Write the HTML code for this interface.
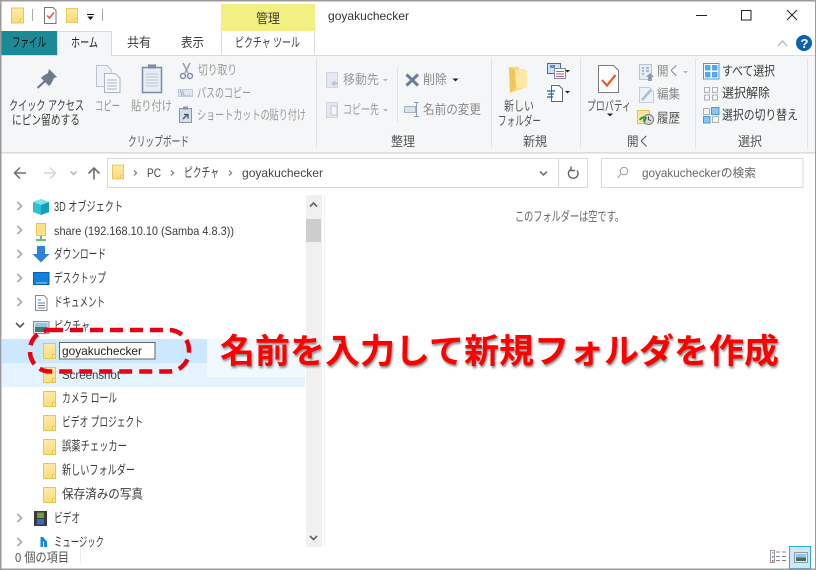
<!DOCTYPE html>
<html lang="ja"><head><meta charset="utf-8"><title>goyakuchecker</title>
<style>
html,body{margin:0;padding:0;background:#fff;width:816px;height:570px;overflow:hidden}
svg{display:block}
text{font-family:"Liberation Sans","Noto Sans CJK JP",sans-serif;font-size:13px;fill:#3c3c3c}
text.l{font-size:12px}
.g{fill:#9a9a9a}.m{fill:#555}.d{fill:#222}
.c{fill:none;stroke:#a6a6a6;stroke-width:1.6}
</style></head><body>
<svg width="816" height="570" viewBox="0 0 816 570" xmlns="http://www.w3.org/2000/svg">
<defs>
<linearGradient id="fg" x1="0" y1="0" x2="0" y2="1"><stop offset="0" stop-color="#ffeaa4"/><stop offset="1" stop-color="#fbdc7e"/></linearGradient>
<symbol id="f" viewBox="0 0 13 16" overflow="visible"><rect x=".5" y=".5" width="12" height="15" fill="url(#fg)" stroke="#eac453"/><path d="M9.5 15.5V11.5H12.5" fill="#fff3c4" stroke="#eac453"/></symbol>
</defs>
<rect width="816" height="570" fill="#fff"/>
<!-- title area -->
<rect x="221" y="4" width="94" height="27" fill="#f2f083"/>
<text x="256" y="23" textLength="24" lengthAdjust="spacingAndGlyphs">管理</text>
<path d="M221.5 31V54M314.5 31V54" stroke="#d9d9d9"/>
<text x="235" y="47" textLength="65" lengthAdjust="spacingAndGlyphs">ピクチャ ツール</text>
<text class="l" x="328" y="20" textLength="81" lengthAdjust="spacingAndGlyphs" style="fill:#333">goyakuchecker</text>
<use href="#f" x="11" y="7" width="13" height="17"/>
<path d="M32.5 9V21M102.5 9V21" stroke="#a8a8a8"/>
<path d="M44.5 7.5H53L56 10.5V23.5H44.5Z" fill="#fff" stroke="#777"/><path d="M47 15.5L49.5 18L54 12.5" fill="none" stroke="#e8552a" stroke-width="1.5"/>
<use href="#f" x="66" y="7" width="12" height="17"/>
<path d="M87 14.5H94" stroke="#111"/><path d="M87.5 16.5H93.5L90.5 20Z" fill="#111"/>
<!-- window buttons -->
<path d="M696 15.5H707" stroke="#222"/><rect x="741.5" y="10.5" width="9.5" height="9.5" fill="none" stroke="#222"/><path d="M787 10L797 20M797 10L787 20" stroke="#222"/>
<path d="M778 46L782.5 41L787 46" fill="none" stroke="#bdbdbd" stroke-width="1.5"/>
<circle cx="804" cy="43" r="8" fill="#0a62b3"/><text x="800.5" y="48" style="font-size:13px;font-weight:bold;fill:#fff">?</text>
<!-- tabs -->
<rect x="1" y="31" width="56" height="24" fill="#1a8a96"/>
<text x="12" y="47" textLength="34" lengthAdjust="spacingAndGlyphs" style="fill:#111">ファイル</text>
<rect x="0" y="55" width="816" height="1" fill="#dadbdc"/>
<rect x="57.5" y="31.5" width="54" height="24" fill="#f5f6f7" stroke="#dadbdc"/><rect x="58" y="54" width="53" height="3" fill="#f5f6f7"/>
<text x="71" y="47" textLength="27" lengthAdjust="spacingAndGlyphs" style="fill:#222">ホーム</text>
<text x="127" y="47" textLength="24" lengthAdjust="spacingAndGlyphs">共有</text>
<text x="181" y="47" textLength="23" lengthAdjust="spacingAndGlyphs">表示</text>
<!-- ribbon -->
<rect x="1" y="56" width="815" height="96" fill="#f5f6f7"/>
<rect x="0" y="152" width="816" height="1.5" fill="#dadbdc"/>
<path d="M316.5 58V149M491.5 58V149M580.5 58V149M695.5 58V149M807.5 58V149" stroke="#e2e3e4"/>
<path d="M397.5 67V122" stroke="#dfe0e1"/>
<!-- clipboard -->
<path d="M49 69L57 77L54 78L51 84L49 86L41 78L43 76L48 73Z" fill="#6e7b8c"/><path d="M45 81L37.5 88" stroke="#6e7b8c" stroke-width="2.2"/>
<path d="M96.5 65.5H107L111 69.5V86.5H96.5Z" fill="#eef2f8" stroke="#b7c3d6"/><path d="M104.5 73.5H115L120 78V92.5H104.5Z" fill="#f5f7fb" stroke="#a8b6cc"/><path d="M107 80H117M107 83H117M107 86H117M107 89H117" stroke="#a9b5c8"/>
<rect x="142.5" y="67.5" width="19" height="25" fill="#e7ecf4" stroke="#7a8ba8" stroke-width="1.5"/><rect x="148" y="64.5" width="8" height="4" fill="#7a8ba8"/><path d="M146 74H158M146 77H158M146 80H158M146 83H158M146 86H158" stroke="#bfc9d9"/>
<path d="M183 63L188 73M190 63L185 73" stroke="#9aa3ae" stroke-width="1.6"/><circle cx="183" cy="76" r="2.5" fill="none" stroke="#7d8ea8" stroke-width="1.5"/><circle cx="190" cy="76" r="2.5" fill="none" stroke="#7d8ea8" stroke-width="1.5"/>
<rect x="178.5" y="89.5" width="14" height="7" fill="#dde5f1" stroke="#bfcbdd"/><text x="180" y="96" textLength="11" lengthAdjust="spacingAndGlyphs" style="font-size:7px;fill:#7d8ea8">\\...</text>
<rect x="179.5" y="108.5" width="12" height="14" fill="#d5deea" stroke="#8595ad"/><rect x="183" y="106.5" width="5" height="3" fill="#8595ad"/><path d="M183 119L187 115M184 114.5H188V118.5" fill="none" stroke="#44546c" stroke-width="1.3"/>
<text x="9" y="110" textLength="75" lengthAdjust="spacingAndGlyphs">クイック アクセス</text>
<text x="12" y="124.5" textLength="68" lengthAdjust="spacingAndGlyphs">にピン留めする</text>
<text x="95" y="110.5" textLength="25" lengthAdjust="spacingAndGlyphs" class="g">コピー</text>
<text x="131" y="110.5" textLength="41" lengthAdjust="spacingAndGlyphs" class="g">貼り付け</text>
<text x="198" y="74.5" textLength="39" lengthAdjust="spacingAndGlyphs" class="g">切り取り</text>
<text x="197" y="97.5" textLength="54" lengthAdjust="spacingAndGlyphs" class="g">パスのコピー</text>
<text x="197" y="119.5" textLength="109" lengthAdjust="spacingAndGlyphs" class="g">ショートカットの貼り付け</text>
<text x="128" y="146" textLength="61" lengthAdjust="spacingAndGlyphs" class="m">クリップボード</text>
<!-- organize -->
<rect x="326.5" y="72.5" width="11" height="15" fill="#e4e9f1" stroke="#ccd5e2"/><path d="M331 83.5L335 80.5V82.5H338V84.5H335V86.5Z" fill="#b7c2d3"/>
<rect x="326.5" y="102.5" width="11" height="15" fill="#e4e9f1" stroke="#ccd5e2"/><rect x="331" y="106" width="6" height="9" fill="#f3f5f9" stroke="#bcc7d7"/>
<text x="343" y="84" textLength="36" lengthAdjust="spacingAndGlyphs" class="g">移動先</text>
<path d="M383 79H388L385.5 81.5Z" fill="#b4b4b4"/>
<text x="343" y="114" textLength="36" lengthAdjust="spacingAndGlyphs" class="g">コピー先</text>
<path d="M383 109H388L385.5 111.5Z" fill="#b4b4b4"/>
<path d="M406.5 74.5L418 85.5M418 74.5L406.5 85.5" stroke="#6b7e99" stroke-width="3"/>
<text x="423" y="84" textLength="24" lengthAdjust="spacingAndGlyphs" style="fill:#8a8a8a">削除</text>
<path d="M452.5 78.5H458.5L455.5 81.5Z" fill="#222"/>
<rect x="404.5" y="106.5" width="11" height="6" fill="#dbe2ed" stroke="#a4b1c5"/><path d="M416.5 102.5V116.5M414 102.5H419M414 116.5H419" stroke="#8c9cb3"/>
<text x="423" y="114" textLength="58" lengthAdjust="spacingAndGlyphs" style="fill:#8a8a8a">名前の変更</text>
<text x="391" y="146" textLength="24" lengthAdjust="spacingAndGlyphs" class="m">整理</text>
<!-- new -->
<path d="M509 67H519V69L527 70V87L510 93Z" fill="#fbd978"/><path d="M515 70H527V88H512Z" fill="#fde9a4"/><path d="M509 67L515 70L516 88L510 93Z" fill="#eec65c"/>
<rect x="547.5" y="63.5" width="13" height="10" fill="#cfe0f1" stroke="#4d6d8f"/><rect x="550" y="65" width="5" height="3" fill="#5c8fc2"/><rect x="554.5" y="68.5" width="11" height="10" fill="#fff" stroke="#7b8ba1"/><path d="M556 71.5H564M556 74H564M556 76.5H564" stroke="#c05b7a"/>
<path d="M565 70H570L567.5 72.5Z" fill="#222"/>
<path d="M551.5 85.5H559L562.5 89V101.5H551.5Z" fill="#fff" stroke="#666"/><path d="M547 91H555M548 94H554M547 97H553" stroke="#1565b8" stroke-width="1.3"/>
<path d="M565 91H570L567.5 93.5Z" fill="#222"/>
<text x="504" y="110.5" textLength="30" lengthAdjust="spacingAndGlyphs" class="m">新しい</text>
<text x="498" y="125.5" textLength="43" lengthAdjust="spacingAndGlyphs" class="m">フォルダー</text>
<text x="523" y="146" textLength="24" lengthAdjust="spacingAndGlyphs" class="m">新規</text>
<!-- open -->
<path d="M598.5 65.5H613.5L618.5 70.5V92.5H598.5Z" fill="#fff" stroke="#7b7b7b"/><path d="M602 80L607 85.5L615.5 75" fill="none" stroke="#ee5a24" stroke-width="2.2"/>
<text x="587" y="110.5" textLength="44" lengthAdjust="spacingAndGlyphs" class="m">プロパティ</text>
<path d="M607 113.5H613L610 116.5Z" fill="#222"/>
<rect x="639.5" y="64.5" width="12" height="15" fill="#e6ecf4" stroke="#b8c4d5"/><path d="M642 68H644M642 71H644M642 74H644M646 68H649M646 71H649" stroke="#8c9cb3" stroke-width="1.3"/><path d="M650 73L654 77H652V81H648V77H646Z" fill="#8c9cb3"/>
<text x="657" y="75.5" textLength="23" lengthAdjust="spacingAndGlyphs" style="fill:#8a8a8a">開く</text>
<path d="M683 71H688L685.5 73.5Z" fill="#b4b4b4"/>
<path d="M639.5 87.5H649.5L653.5 91.5V102.5H639.5Z" fill="#eef2f8" stroke="#c2ccdb"/><path d="M642 100L651 90" stroke="#a8bddb" stroke-width="2.5"/>
<text x="657" y="98.5" textLength="23" lengthAdjust="spacingAndGlyphs" style="fill:#8a8a8a">編集</text>
<rect x="637.5" y="110.5" width="12" height="13" fill="#fce49a" stroke="#e6c35a"/><circle cx="648.5" cy="119.5" r="5" fill="#dcdcdc" stroke="#777"/><path d="M648.5 116.5V119.5L651 121" fill="none" stroke="#444"/><path d="M640 120A4 4 0 0 1 646 118L644 122" fill="none" stroke="#2d9a3e" stroke-width="2"/>
<text x="657" y="122.5" textLength="23" lengthAdjust="spacingAndGlyphs" class="m">履歴</text>
<text x="627" y="146" textLength="23" lengthAdjust="spacingAndGlyphs" class="m">開く</text>
<!-- select -->
<rect x="703.5" y="63.5" width="15.5" height="15.5" fill="#fff" stroke="#3d9fe0"/><rect x="705" y="65" width="5.5" height="5.5" fill="#55a9e8"/><rect x="712" y="65" width="5.5" height="5.5" fill="#55a9e8"/><rect x="705" y="72" width="5.5" height="5.5" fill="#55a9e8"/><rect x="712" y="72" width="5.5" height="5.5" fill="#55a9e8"/>
<text x="722" y="75.5" textLength="53" lengthAdjust="spacingAndGlyphs">すべて選択</text>
<rect x="704.5" y="87.5" width="5" height="5" fill="none" stroke="#b0b0b0"/><rect x="712.5" y="87.5" width="5" height="5" fill="none" stroke="#b0b0b0"/><rect x="704.5" y="95" width="5" height="5" fill="none" stroke="#b0b0b0"/><rect x="712.5" y="95" width="5" height="5" fill="none" stroke="#b0b0b0"/>
<text x="722" y="97.5" textLength="48" lengthAdjust="spacingAndGlyphs">選択解除</text>
<rect x="703.5" y="108.5" width="6" height="6" fill="none" stroke="#b0b0b0"/><rect x="711.5" y="107.5" width="7.5" height="7" fill="#8cc5ef" stroke="#3d9fe0"/><rect x="703.5" y="116.5" width="6.5" height="6.5" fill="#8cc5ef" stroke="#3d9fe0"/><rect x="712.5" y="116.5" width="6" height="6" fill="none" stroke="#b0b0b0"/>
<text x="722" y="119.5" textLength="76" lengthAdjust="spacingAndGlyphs">選択の切り替え</text>
<text x="738" y="146" textLength="24" lengthAdjust="spacingAndGlyphs" class="m">選択</text>
<!-- nav -->
<path d="M20 167.5L14.5 173L20 178.5M15 173H26" fill="none" stroke="#6d6d6d" stroke-width="1.5"/>
<path d="M50 167.5L55.5 173L50 178.5M55 173H44" fill="none" stroke="#d6d6d6" stroke-width="1.5"/>
<path d="M70.5 171.5L73.5 174.5L76.5 171.5" fill="none" stroke="#b5b5b5" stroke-width="1.5"/>
<path d="M88.5 173.5L94 168L99.5 173.5M94 168.5V179.5" fill="none" stroke="#6d6d6d" stroke-width="1.6"/>
<rect x="107.5" y="158.5" width="480" height="29" fill="#fff" stroke="#d9d9d9"/>
<path d="M558.5 159V187" stroke="#d9d9d9"/>
<use href="#f" x="112" y="164" width="12" height="16"/>
<path d="M134 170.5L136.5 173L134 175.5M171 170.5L173.5 173L171 175.5M229 170.5L231.5 173L229 175.5" fill="none" stroke="#888" stroke-width="1.4"/>
<text class="l" x="147" y="177" textLength="14" lengthAdjust="spacingAndGlyphs" style="fill:#444">PC</text>
<text x="184" y="177" textLength="35" lengthAdjust="spacingAndGlyphs" style="fill:#444">ピクチャ</text>
<text class="l" x="242" y="177" textLength="81" lengthAdjust="spacingAndGlyphs" style="fill:#444">goyakuchecker</text>
<path d="M540 171.5L543.5 175L547 171.5" fill="none" stroke="#666" stroke-width="1.5"/>
<path d="M577 170.5A4.8 4.8 0 1 1 571.5 169M571 166.5V170.5H575" fill="none" stroke="#666" stroke-width="1.4"/>
<rect x="601.5" y="158.5" width="201.5" height="29" fill="#fff" stroke="#d9d9d9"/>
<circle cx="624" cy="171" r="3.8" fill="none" stroke="#9a9aa6"/><path d="M621 174L617.5 178" stroke="#b79ab0"/>
<text class="l" x="642" y="177" textLength="114" lengthAdjust="spacingAndGlyphs" style="fill:#666">goyakucheckerの検索</text>
<text x="515" y="221" textLength="109" lengthAdjust="spacingAndGlyphs" style="fill:#666">このフォルダーは空です。</text>
<!-- tree selection -->
<rect x="2" y="339" width="205" height="24" fill="#cce8ff"/>
<rect x="207" y="339" width="98" height="38" fill="#f1f8fe"/>
<rect x="2" y="363" width="205" height="24" fill="#e5f3ff"/>
<rect x="207" y="377" width="98" height="10" fill="#e5f3ff"/>
<!-- tree chevrons -->
<path class="c" d="M17.5 202L21.5 206L17.5 210M17.5 226L21.5 230L17.5 234M17.5 250L21.5 254L17.5 258M17.5 274L21.5 278L17.5 282M17.5 298L21.5 302L17.5 306M17.5 514L21.5 518L17.5 522M17.5 538L21.5 542L17.5 546"/>
<path d="M16 323L20 327L24 323" fill="none" stroke="#555" stroke-width="1.6"/>
<!-- tree icons -->
<path d="M41 199L49 202V212L41 215L33 212V202Z" fill="#2fc0d8"/><path d="M41 199L49 202L41 205L33 202Z" fill="#7fe3ee"/><path d="M41 205L49 202V212L41 215Z" fill="#139fb8"/>
<path d="M36.5 223.5H45.5V235.5H36.5Z" fill="#fde28a" stroke="#e8c14e"/><path d="M41 236V239M36 240H46" stroke="#3fa33f" stroke-width="1.5"/>
<path d="M37 246H45V254H49.5L41 262.5L32.5 254H37Z" fill="#2d83dc"/>
<rect x="33.5" y="272.5" width="15.5" height="12" fill="#0f81de" stroke="#0a5fa8"/><path d="M36 283H47" stroke="#9cd0f5"/>
<path d="M35.5 295.5H44L47 298.5V310.5H35.5Z" fill="#fff" stroke="#8a8a8a"/><path d="M38 300H41M38 303H45M38 305.5H45M38 308H45" stroke="#4c82c0"/>
<rect x="33.5" y="321.5" width="15.5" height="12" fill="#dfe5ea" stroke="#8f8f8f"/><rect x="35" y="323" width="12.5" height="4" fill="#8ec8e8"/><rect x="35" y="327" width="12.5" height="5" fill="#3e7d6a"/>
<rect x="34" y="511" width="13" height="15" fill="#3a3a3a"/><rect x="37" y="512.5" width="7" height="5.5" fill="#6f9e3e"/><rect x="37" y="519" width="7" height="5.5" fill="#2f6fc0"/>
<path d="M40.5 537H43L47 541.5V547H44V542L43 541V547H40.5Z" fill="#0f87e6"/>
<!-- tree folders -->
<use href="#f" x="43" y="343" width="13" height="16"/>
<use href="#f" x="43" y="367" width="13" height="16"/>
<use href="#f" x="43" y="391" width="13" height="16"/>
<use href="#f" x="43" y="415" width="13" height="16"/>
<use href="#f" x="43" y="439" width="13" height="16"/>
<use href="#f" x="43" y="463" width="13" height="16"/>
<use href="#f" x="43" y="487" width="13" height="16"/>
<!-- tree text -->
<text x="54" y="211" textLength="69" lengthAdjust="spacingAndGlyphs">3D オブジェクト</text>
<text class="l" x="54" y="235" textLength="180" lengthAdjust="spacingAndGlyphs">share (192.168.10.10 (Samba 4.8.3))</text>
<text x="54" y="258.5" textLength="52" lengthAdjust="spacingAndGlyphs">ダウンロード</text>
<text x="54" y="282.5" textLength="52" lengthAdjust="spacingAndGlyphs">デスクトップ</text>
<text x="54" y="306.5" textLength="51" lengthAdjust="spacingAndGlyphs">ドキュメント</text>
<text x="54" y="330.5" textLength="36" lengthAdjust="spacingAndGlyphs">ピクチャ</text>
<rect x="59.5" y="342.5" width="95.5" height="16.5" fill="#fff" stroke="#666"/>
<text class="l d" x="62" y="355" textLength="80" lengthAdjust="spacingAndGlyphs">goyakuchecker</text>
<text class="l" x="62" y="379" textLength="58" lengthAdjust="spacingAndGlyphs">Screenshot</text>
<text x="62" y="402.5" textLength="55" lengthAdjust="spacingAndGlyphs">カメラ ロール</text>
<text x="62" y="426.5" textLength="81" lengthAdjust="spacingAndGlyphs">ビデオ プロジェクト</text>
<text x="62" y="450.5" textLength="65" lengthAdjust="spacingAndGlyphs">誤薬チェッカー</text>
<text x="62" y="474.5" textLength="73" lengthAdjust="spacingAndGlyphs">新しいフォルダー</text>
<text x="62" y="498.5" textLength="81" lengthAdjust="spacingAndGlyphs">保存済みの写真</text>
<text x="54" y="522.5" textLength="26" lengthAdjust="spacingAndGlyphs">ビデオ</text>
<text x="54" y="546.5" textLength="50" lengthAdjust="spacingAndGlyphs">ミュージック</text>
<!-- scrollbar -->
<rect x="306" y="195" width="16" height="352" fill="#f0f0f0"/>
<rect x="306" y="219" width="15" height="23" fill="#cdcdcd"/>
<path d="M310 206.5L313.5 203L317 206.5" fill="none" stroke="#606060" stroke-width="1.6"/>
<path d="M310 536L313.5 539.5L317 536" fill="none" stroke="#606060" stroke-width="1.6"/>
<path d="M324.5 195V547" stroke="#f0f0f0"/>
<!-- status -->
<rect x="1" y="547" width="814" height="22" fill="#fff"/>
<text x="15" y="562" textLength="54" lengthAdjust="spacingAndGlyphs" style="fill:#555">0 個の項目</text>
<path d="M80.5 549V563" stroke="#ececec"/>
<rect x="770.5" y="550.5" width="4" height="12" fill="#fff" stroke="#999"/><rect x="772" y="552" width="1.5" height="1.5" fill="#999"/><rect x="772" y="556" width="1.5" height="1.5" fill="#3b86d1"/><rect x="772" y="560" width="1.5" height="1.5" fill="#d1423b"/>
<path d="M776 552H780M782 552H786M776 556.5H780M782 556.5H786M776 560.5H780M782 560.5H786" stroke="#888"/>
<rect x="789.5" y="546.5" width="21" height="22" fill="#cce8ff" stroke="#2ba6de"/>
<rect x="794.5" y="552.5" width="13" height="10" fill="#dfe7ec" stroke="#999"/><rect x="796" y="554" width="10" height="3.5" fill="#8ec8e8"/><rect x="796" y="557.5" width="10" height="3.5" fill="#3e6f5f"/>
<!-- annotation -->
<rect x="30" y="330" width="159" height="41.5" rx="20" fill="none" stroke="#e60012" stroke-width="4.5" stroke-dasharray="13 7"/>
<text x="220" y="363" textLength="559" lengthAdjust="spacingAndGlyphs" style="font-size:34px;font-weight:bold;fill:#ff0000;filter:drop-shadow(1.5px 2px 1px #8a8a8a)">名前を入力して新規フォルダを作成</text>
<!-- window border -->
<rect x="0" y="0" width="816" height="1.5" fill="#9a9a9a"/>
<rect x="0" y="0" width="1.5" height="570" fill="#9a9a9a"/>
<rect x="0" y="568.5" width="816" height="1.5" fill="#9a9a9a"/>
<rect x="815" y="0" width="1" height="570" fill="#9a9a9a"/>
</svg>
</body></html>
